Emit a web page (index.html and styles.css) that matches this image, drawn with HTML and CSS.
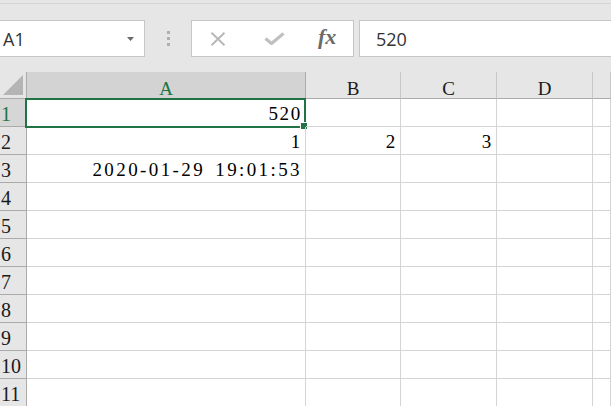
FILE: index.html
```html
<!DOCTYPE html>
<html lang="zh-CN">
<head>
    <meta charset="UTF-8">
    <title>Book1 - Excel</title>
    <link rel="stylesheet" href="styles.css">
</head>
<body>
    <div class="top-line"></div>

    <div class="formula-bar">
        <div class="name-box">
            <span>A1</span>
            <svg class="caret" width="7" height="4" viewBox="0 0 7 4"><polygon points="0,0 7,0 3.5,4" fill="#6a6a6a"/></svg>
        </div>
        <div class="grip"><i></i><i></i><i></i></div>
        <div class="fx-buttons">
            <svg class="btn-icon" width="18" height="14" viewBox="0 0 18 14">
                <path d="M2.5 0.8 L15.5 13.2 M15.5 0.8 L2.5 13.2" stroke="#b8b8b8" stroke-width="2" fill="none"/>
            </svg>
            <svg class="btn-icon" width="21" height="13" viewBox="0 0 21 13">
                <path d="M1.5 6.5 L7.5 11.5 L19.5 1.5" stroke="#c0c0c0" stroke-width="3.2" fill="none"/>
            </svg>
            <span class="fx">fx</span>
        </div>
        <div class="formula-input">520</div>
    </div>

    <div class="sheet">
        <div class="corner">
            <svg width="20" height="20" viewBox="0 0 20 20"><polygon points="20,0 20,20 0,20" fill="#b4b4b4"/></svg>
        </div>
        <div class="col-head selected">A</div>
        <div class="col-head">B</div>
        <div class="col-head">C</div>
        <div class="col-head">D</div>
        <div class="col-head"></div>

        <div class="row-head selected">1</div>
        <div class="cell active">520<span class="selection"><b class="handle"></b></span></div>
        <div class="cell"></div><div class="cell"></div><div class="cell"></div><div class="cell"></div>

        <div class="row-head">2</div>
        <div class="cell">1</div>
        <div class="cell">2</div><div class="cell">3</div><div class="cell"></div><div class="cell"></div>

        <div class="row-head">3</div>
        <div class="cell date">2020-01-29 19:01:53</div>
        <div class="cell"></div><div class="cell"></div><div class="cell"></div><div class="cell"></div>

        <div class="row-head">4</div>
        <div class="cell"></div><div class="cell"></div><div class="cell"></div><div class="cell"></div><div class="cell"></div>

        <div class="row-head">5</div>
        <div class="cell"></div><div class="cell"></div><div class="cell"></div><div class="cell"></div><div class="cell"></div>

        <div class="row-head">6</div>
        <div class="cell"></div><div class="cell"></div><div class="cell"></div><div class="cell"></div><div class="cell"></div>

        <div class="row-head">7</div>
        <div class="cell"></div><div class="cell"></div><div class="cell"></div><div class="cell"></div><div class="cell"></div>

        <div class="row-head">8</div>
        <div class="cell"></div><div class="cell"></div><div class="cell"></div><div class="cell"></div><div class="cell"></div>

        <div class="row-head">9</div>
        <div class="cell"></div><div class="cell"></div><div class="cell"></div><div class="cell"></div><div class="cell"></div>

        <div class="row-head">10</div>
        <div class="cell"></div><div class="cell"></div><div class="cell"></div><div class="cell"></div><div class="cell"></div>

        <div class="row-head">11</div>
        <div class="cell"></div><div class="cell"></div><div class="cell"></div><div class="cell"></div><div class="cell"></div>
    </div>
</body>
</html>
```

FILE: styles.css
```css
body {
    margin: 0;
    background: #e6e6e6;
    font-family: 'Liberation Serif', 'Noto Sans CJK SC', serif;
    overflow: hidden;
}
.top-line {
    margin-top: 3px;
    height: 1px;
    background: #d4d4d4;
}

/* Formula bar */
.formula-bar {
    display: flex;
    height: 37px;
    margin-top: 16px;
    margin-bottom: 15px;
    font-family: 'Open Sans', 'Liberation Sans', sans-serif;
    color: #333333;
}
.name-box {
    box-sizing: border-box;
    width: 146px;
    margin-left: -1px;
    background: #ffffff;
    border: 1px solid #c6c6c6;
    display: flex;
    align-items: center;
    justify-content: space-between;
    padding: 0 10px 0 3px;
    font-size: 18px;
}
.caret {
    margin-top: 1px;
}
.grip {
    width: 46px;
    display: flex;
    flex-direction: column;
    align-items: center;
    justify-content: center;
    gap: 3px;
}
.grip i {
    display: block;
    width: 3px;
    height: 3px;
    background: #b0b0b0;
}
.fx-buttons {
    box-sizing: border-box;
    width: 163px;
    background: #ffffff;
    border: 1px solid #c6c6c6;
    display: flex;
    align-items: center;
    padding-left: 17px;
}
.btn-icon:first-child {
    margin-right: 37px;
}
.fx {
    margin-left: 33px;
    margin-top: -4px;
    font-family: 'Liberation Serif', serif;
    font-style: italic;
    font-weight: bold;
    font-size: 22px;
    color: #6a6a6a;
}
.formula-input {
    flex: 1;
    margin-left: 5px;
    margin-right: -2px;
    background: #ffffff;
    border: 1px solid #c6c6c6;
    display: flex;
    align-items: center;
    padding-left: 16px;
    font-size: 18px;
}

/* Sheet grid */
.sheet {
    display: grid;
    grid-template-columns: 27px 279px 95px 96px 96px 1fr;
    grid-template-rows: 27px;
    grid-auto-rows: 28px;
    background: #ffffff;
}
.sheet > div {
    box-sizing: border-box;
}
.corner {
    background: #e6e6e6;
    border-right: 1px solid #ababab;
    border-bottom: 1px solid #ababab;
    display: flex;
    align-items: flex-end;
    justify-content: flex-end;
    padding: 0 3px 3px 0;
}
.col-head {
    background: #e6e6e6;
    border-right: 1px solid #c6c6c6;
    border-bottom: 1px solid #ababab;
    text-align: center;
    font-size: 19px;
    line-height: 19px;
    padding-top: 7px;
    color: #1a1a1a;
}
.col-head.selected {
    background: #d3d3d3;
    color: #217346;
    border-right-color: #ababab;
}
.row-head {
    background: #e6e6e6;
    border-right: 1px solid #ababab;
    border-bottom: 1px solid #ababab;
    font-size: 20px;
    line-height: 20px;
    padding: 5px 0 0 1px;
    color: #1a1a1a;
    white-space: nowrap;
}
.row-head.selected {
    background: #d6d6d6;
    color: #217346;
}
.cell {
    position: relative;
    border-right: 1px solid #d4d4d4;
    border-bottom: 1px solid #d4d4d4;
    display: flex;
    align-items: flex-end;
    justify-content: flex-end;
    padding: 0 3px 3px 0;
    font-size: 19px;
    line-height: 19px;
    letter-spacing: 1.7px;
    color: #000000;
    white-space: nowrap;
}
.cell.date {
    letter-spacing: 2.4px;
    word-spacing: 3px;
}

/* Active cell */
.selection {
    position: absolute;
    top: -1px;
    left: -2px;
    right: -1px;
    bottom: -2px;
    border: 2px solid #217346;
}
.handle {
    position: absolute;
    right: -4px;
    bottom: -4px;
    width: 6px;
    height: 6px;
    background: #217346;
    border: 1px solid #ffffff;
}
```
